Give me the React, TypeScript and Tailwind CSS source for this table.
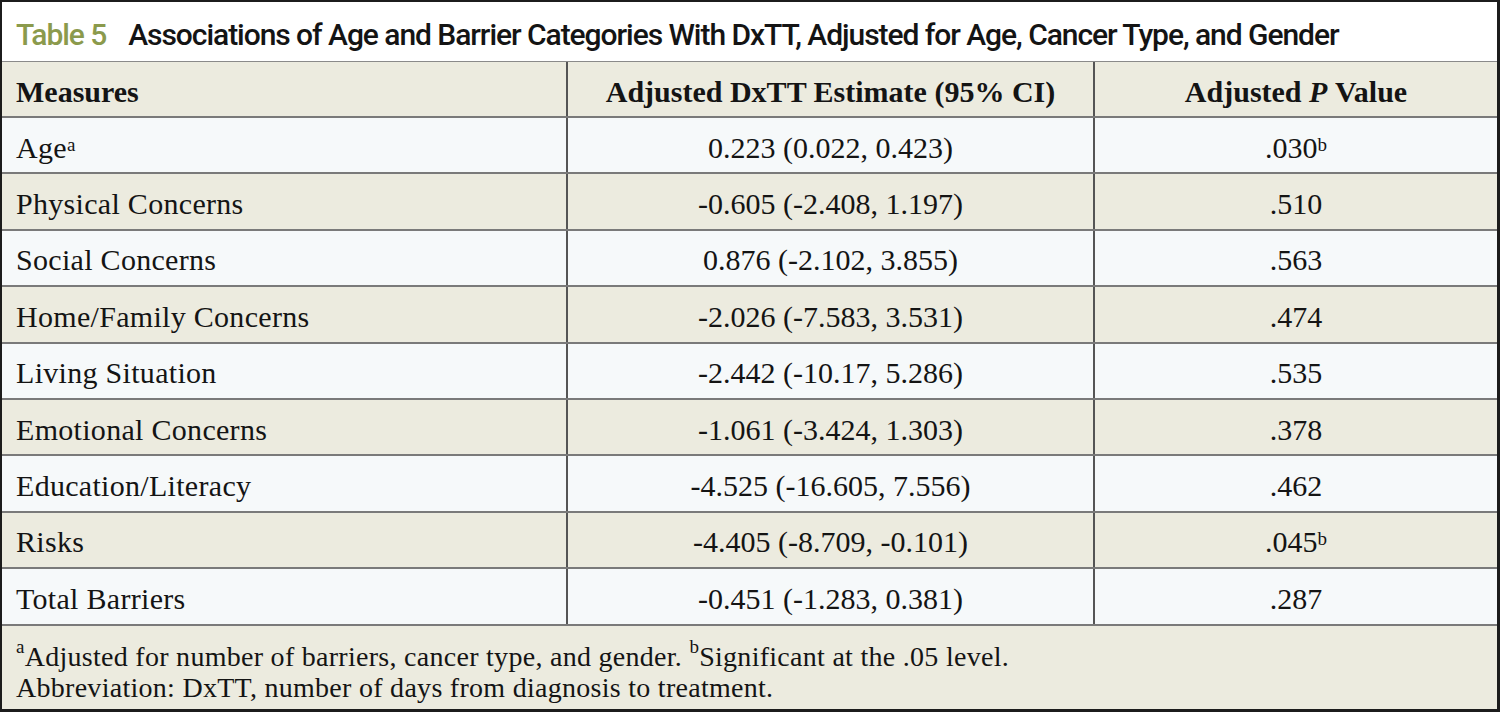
const rows: { label: string; sup?: string; est: string; p: string; psup?: string }[] = [
  { label: 'Age', sup: 'a', est: '0.223 (0.022, 0.423)', p: '.030', psup: 'b' },
  { label: 'Physical Concerns', est: '-0.605 (-2.408, 1.197)', p: '.510' },
  { label: 'Social Concerns', est: '0.876 (-2.102, 3.855)', p: '.563' },
  { label: 'Home/Family Concerns', est: '-2.026 (-7.583, 3.531)', p: '.474' },
  { label: 'Living Situation', est: '-2.442 (-10.17, 5.286)', p: '.535' },
  { label: 'Emotional Concerns', est: '-1.061 (-3.424, 1.303)', p: '.378' },
  { label: 'Education/Literacy', est: '-4.525 (-16.605, 7.556)', p: '.462' },
  { label: 'Risks', est: '-4.405 (-8.709, -0.101)', p: '.045', psup: 'b' },
  { label: 'Total Barriers', est: '-0.451 (-1.283, 0.381)', p: '.287' },
];

const serif = "font-['Liberation_Serif',serif]";

function Sup({ children }: { children: string }) {
  return <sup className="relative -top-[3px] align-super text-[19px] leading-none">{children}</sup>;
}

export default function App() {
  return (
    <div className="flex h-[712px] w-[1500px] flex-col border-t-2 border-r-[3px] border-b-[3px] border-l-2 border-[#1c1c1c] bg-white text-[#141414]">
      <div className="flex h-[60px] shrink-0 items-center border-b border-[#8a8a8a] pt-[6px] pl-[14px] font-['Roboto',sans-serif] text-[30px] tracking-[-0.035em]">
        <span className="font-medium text-[#8b9a4c]">Table 5</span>
        <span className="ml-[22px] font-medium">
          Associations of Age and Barrier Categories With DxTT, Adjusted for Age, Cancer Type, and Gender
        </span>
      </div>
      <div className={`grid h-[56px] shrink-0 grid-cols-[564px_527px_1fr] border-b-2 border-[#7a7a7a] bg-[#ecebdf] text-[30px] font-bold ${serif}`}>
        <div className="flex items-center pl-[14px] pt-[4px]">Measures</div>
        <div className="flex items-center justify-center border-l-2 border-[#555] pt-[4px]">Adjusted DxTT Estimate (95% CI)</div>
        <div className="flex items-center justify-center border-l-2 border-[#555] pt-[4px]">
          Adjusted&nbsp;<i>P</i>&nbsp;Value
        </div>
      </div>
      {rows.map((r, i) => (
        <div
          key={r.label}
          className={`grid h-[56.4px] shrink-0 grid-cols-[564px_527px_1fr] border-b-2 border-[#7a7a7a] text-[30px] ${serif} ${i % 2 === 0 ? 'bg-[#f6f9fa]' : 'bg-[#ecebdf]'}`}
        >
          <div className="flex items-center pl-[14px] pt-[4px] tracking-[0.01em]">
            {r.label}
            {r.sup ? <Sup>{r.sup}</Sup> : null}
          </div>
          <div className="flex items-center justify-center border-l-2 border-[#555] pt-[4px]">{r.est}</div>
          <div className="flex items-center justify-center border-l-2 border-[#555] pt-[4px]">
            {r.p}
            {r.psup ? <Sup>{r.psup}</Sup> : null}
          </div>
        </div>
      ))}
      <div className={`flex flex-1 flex-col justify-center bg-[#ecebdf] pt-[8px] pl-[14px] text-[28px] leading-[31px] tracking-[0.01em] ${serif}`}>
        <p>
          <Sup>a</Sup>Adjusted for number of barriers, cancer type, and gender. <Sup>b</Sup>Significant at the .05 level.
        </p>
        <p>Abbreviation: DxTT, number of days from diagnosis to treatment.</p>
      </div>
    </div>
  );
}
